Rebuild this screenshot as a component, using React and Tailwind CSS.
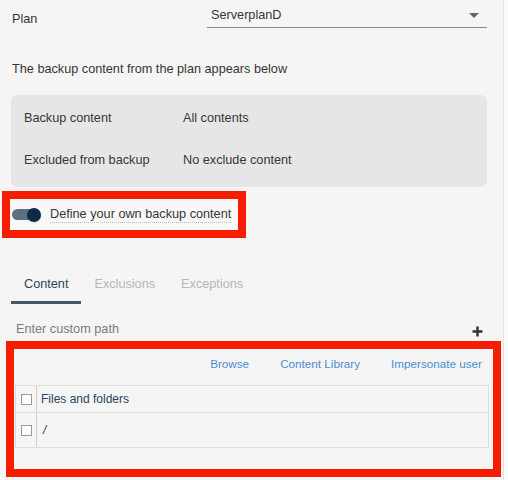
import { useState } from "react";

export default function App() {
  const [tab, setTab] = useState("content");
  const [own, setOwn] = useState(true);

  const tabs = [
    { id: "content", label: "Content" },
    { id: "exclusions", label: "Exclusions" },
    { id: "exceptions", label: "Exceptions" },
  ];

  return (
    <div
      className="w-[508px] h-[480px] bg-[#f4f5f4] text-[12.7px] text-[#363636] overflow-hidden flex"
      style={{ fontFamily: '"Liberation Sans", Arial, sans-serif' }}
    >
      <div className="w-[504px] shrink-0 border-r border-[#e2e3e2] flex flex-col">
        {/* Plan */}
        <div className="flex items-start pl-3 pr-4 pt-[8px] h-[56px]">
          <div className="w-[195px] pt-[2px]">Plan</div>
          <div className="flex-1 flex items-center justify-between border-b border-[#8a8a8a] pl-1 pr-2 h-[20px]">
            <span className="-mt-1">ServerplanD</span>
            <span className="w-0 h-0 -mt-1 border-l-[5px] border-r-[5px] border-t-[5px] border-l-transparent border-r-transparent border-t-[#666]" />
          </div>
        </div>

        <div className="pl-3 h-[39px] pt-[4px]">The backup content from the plan appears below</div>

        {/* Plan content box */}
        <div className="ml-[11px] mr-[16px] h-[92px] rounded-md bg-[#e6e6e6] px-[13px] pt-[14px] flex flex-col gap-[23px]">
          <div className="flex">
            <span className="w-[159px]">Backup content</span>
            <span>All contents</span>
          </div>
          <div className="flex">
            <span className="w-[159px]">Excluded from backup</span>
            <span>No exclude content</span>
          </div>
        </div>

        {/* Toggle */}
        <div className="mt-[4px] ml-[2px] w-[244px] h-[47px] border-[8px] border-[#f61d00] bg-[#f8f8f8] flex items-center">
          <button
            onClick={() => setOwn(!own)}
            className="relative ml-[2px] w-[30px] h-[14px] flex items-center"
          >
            <span className={`w-[28px] h-[11px] rounded-full ${own ? "bg-[#5c7083]" : "bg-[#b8b8b8]"}`} />
            <span
              className={`absolute top-0 w-[14px] h-[14px] rounded-full shadow ${own ? "left-[15px] bg-[#0c2a44]" : "left-0 bg-white"}`}
            />
          </button>
          <span className="ml-[8px] border-b border-dotted border-[#bbb] leading-[15px]">Define your own backup content</span>
        </div>

        {/* Tabs */}
        <div className="flex mt-[37px] ml-[11px] h-[29px]">
          {tabs.map((t) => (
            <button
              key={t.id}
              onClick={() => setTab(t.id)}
              className={`px-[13px] pb-[7px] border-b-[3px] ${
                tab === t.id
                  ? "border-[#43586b] text-[#2f4558]"
                  : "border-transparent text-[#b5b7b9]"
              }`}
            >
              {t.label}
            </button>
          ))}
        </div>

        {/* Custom path */}
        <div className="flex items-center justify-between pl-4 pr-[20px] mt-[16px] h-[20px]">
          <span className="text-[#7c7c7c]">Enter custom path</span>
          <svg width="11" height="11" viewBox="0 0 11 11" className="mt-[3px]">
            <path d="M5.5 0.5v10M0.5 5.5h10" stroke="#333" strokeWidth="2.4" />
          </svg>
        </div>

        {/* Content table */}
        <div className="mt-[1px] ml-[6px] w-[495px] h-[136px] border-[8px] border-[#f61d00] bg-[#f4f5f4] flex flex-col">
          <div className="flex items-start justify-end gap-[31px] pr-[11px] pt-[6px] h-[36px] text-[#4b8ed1] text-[11.7px]">
            <button>Browse</button>
            <button>Content Library</button>
            <button>Impersonate user</button>
          </div>
          <div className="ml-px mr-[4px] border border-[#dedfde] text-[12px]">
            <div className="flex h-[27px] border-b border-[#dedfde]">
              <div className="w-[21px] border-r border-[#cfcfcf] flex items-center justify-center">
                <span className="w-[11px] h-[11px] border border-[#9a9a9a] bg-white" />
              </div>
              <div className="pl-[4px] flex items-center text-[#2a4560]">Files and folders</div>
            </div>
            <div className="flex h-[34px]">
              <div className="w-[21px] border-r border-[#cfcfcf] flex items-center justify-center">
                <span className="w-[11px] h-[11px] border border-[#9a9a9a] bg-white" />
              </div>
              <div className="pl-[6px] flex items-center italic">/</div>
            </div>
          </div>
        </div>
      </div>
      <div className="flex-1 bg-[#fafafa]" />
    </div>
  );
}
